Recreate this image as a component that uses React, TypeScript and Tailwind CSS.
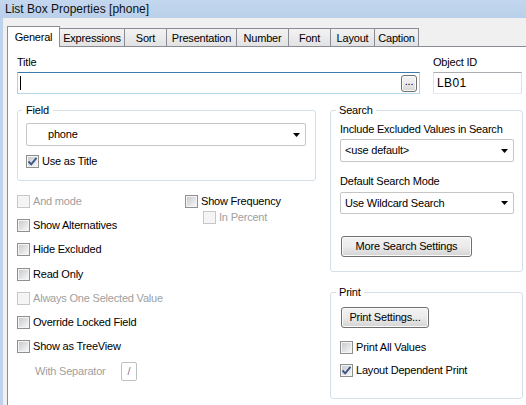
import React from "react";

const TABS = [
  { label: "General", w: "w-[53px]", active: true },
  { label: "Expressions", w: "w-[65px]" },
  { label: "Sort", w: "w-[42px]" },
  { label: "Presentation", w: "w-[70px]" },
  { label: "Number", w: "w-[52px]" },
  { label: "Font", w: "w-[42px]" },
  { label: "Layout", w: "w-[44px]" },
  { label: "Caption", w: "w-[44px]" },
];

function Box({ checked = false, disabled = false }: { checked?: boolean; disabled?: boolean }) {
  return (
    <span
      className={`flex h-[13px] w-[13px] shrink-0 items-center justify-center border ${
        disabled ? "border-[#c6c6c6] bg-[#f7f7f7]" : "border-[#8e8f8f] bg-[#f4f4f4]"
      }`}
    >
      <span
        className={`relative h-[9px] w-[9px] ${
          disabled ? "bg-[#f4f4f4]" : "bg-gradient-to-br from-[#c8cbd0] to-[#f6f6f6]"
        }`}
      >
        {checked && (
          <svg width="11" height="11" viewBox="0 0 11 11" className="absolute -left-[1px] -top-[1px]">
            <path d="M1.5 5.5 L4.2 8.3 L9.5 1.8" fill="none" stroke="#3e5585" strokeWidth="1.9" />
          </svg>
        )}
      </span>
    </span>
  );
}

function Check({
  label,
  checked,
  disabled,
  className = "",
}: {
  label: string;
  checked?: boolean;
  disabled?: boolean;
  className?: string;
}) {
  return (
    <div className={`flex items-center ${className}`}>
      <Box checked={checked} disabled={disabled} />
      <span className={`ml-[3px] whitespace-nowrap ${disabled ? "text-[#a0a0a0]" : "text-black"}`}>{label}</span>
    </div>
  );
}

function Combo({ value, className = "" }: { value: string; className?: string }) {
  return (
    <div
      className={`flex items-center justify-between rounded-[2px] border border-[#c5c5c5] bg-white ${className}`}
    >
      <span className="whitespace-nowrap">{value}</span>
      <svg width="7" height="4" viewBox="0 0 7 4" className="mr-[5px]">
        <path d="M0 0h7L3.5 4z" fill="#000" />
      </svg>
    </div>
  );
}

function Button({ label, className = "" }: { label: string; className?: string }) {
  return (
    <div
      className={`flex items-center justify-center rounded-[3px] border border-[#707070] bg-gradient-to-b from-[#f2f2f2] via-[#ebebeb] to-[#d4d4d4] shadow-[inset_0_0_0_1px_#fbfbfb] ${className}`}
    >
      {label}
    </div>
  );
}

export default function App() {
  return (
    <div className="flex h-[405px] w-[526px] flex-col overflow-hidden bg-[#f0f0f0] font-['Liberation_Sans',Arial,sans-serif] text-[11px] leading-[13px] tracking-[-0.2px] text-black">
      {/* title bar */}
      <div className="flex h-[18px] shrink-0 items-center bg-gradient-to-b from-[#c3d7ee] to-[#b9d0ea] pl-[5px] text-[12px] tracking-normal text-[#111]">
        List Box Properties [phone]
      </div>

      <div className="flex flex-1">
        <div className="w-[3px] shrink-0 bg-[#bed3eb]" />
        <div className="flex flex-1 flex-col pl-[4px] pt-[8px]">
          {/* tabs */}
          <div className="flex h-[21px] items-end">
            {TABS.map((t) =>
              t.active ? (
                <div
                  key={t.label}
                  className={`relative z-10 flex h-[21px] items-center justify-center border border-b-0 border-[#898c95] bg-white ${t.w}`}
                >
                  {t.label}
                </div>
              ) : (
                <div
                  key={t.label}
                  className={`flex h-[19px] items-center justify-center border-r border-t border-[#898c95] bg-gradient-to-b from-[#f3f3f3] to-[#e1e1e1] ${t.w}`}
                >
                  {t.label}
                </div>
              )
            )}
          </div>

          {/* panel */}
          <div className="-mt-[1px] flex-1 border-l border-t border-[#898c95] bg-white pl-[9px] pt-[9px]">
            {/* title / object id */}
            <div className="flex">
              <div className="flex w-[403px] flex-col">
                <div className="h-[13px]">Title</div>
                <div className="mt-[3px] flex h-[22px] items-center justify-between border border-[#b5cfe7] border-t-[#3d7bad] border-b-[#b7d9ed]">
                  <span className="ml-[2px] h-[14px] w-px bg-black" />
                  <Button label="..." className="mr-[2px] h-[17px] w-[16px] rounded-[2px] pb-[3px]" />
                </div>
              </div>
              <div className="ml-[13px] flex w-[89px] flex-col">
                <div className="h-[13px]">Object ID</div>
                <div className="mt-[3px] flex h-[22px] items-center border border-[#e2e3ea] border-t-[#abadb3] border-b-[#e3e9ef] pl-[3px] text-[12px] tracking-[0.4px]">
                  LB01
                </div>
              </div>
            </div>

            <div className="mt-[10px] flex">
              {/* left column */}
              <div className="flex w-[299px] flex-col">
                <fieldset className="rounded-[3px] border border-[#d5dfe5] pb-[12px] pl-[8px] pr-[9px]">
                  <legend className="-ml-[4px] px-[4px] leading-[13px]">Field</legend>
                  <Combo value="phone" className="mt-[6px] h-[23px] pl-[21px]" />
                  <Check label="Use as Title" checked className="mt-[9px] h-[13px]" />
                </fieldset>

                <div className="mt-[8px] flex">
                  <div className="flex w-[168px] flex-col">
                    <Check label="And mode" disabled className="h-[24.3px]" />
                    <Check label="Show Alternatives" className="h-[24.3px]" />
                    <Check label="Hide Excluded" className="h-[24.3px]" />
                    <Check label="Read Only" className="h-[24.3px]" />
                    <Check label="Always One Selected Value" disabled className="h-[24.3px]" />
                    <Check label="Override Locked Field" className="h-[24.3px]" />
                    <Check label="Show as TreeView" className="h-[24.3px]" />
                    <div className="mt-[3px] flex items-center pl-[18px]">
                      <span className="w-[86px] text-[#a0a0a0]">With Separator</span>
                      <div className="flex h-[19px] w-[16px] items-center justify-center rounded-[2px] border border-[#c0c0c0] text-[#8a7a9a]">
                        /
                      </div>
                    </div>
                  </div>
                  <div className="flex flex-col">
                    <Check label="Show Frequency" className="h-[24.3px]" />
                    <Check label="In Percent" disabled className="-mt-[2px] ml-[18px] h-[13px]" />
                  </div>
                </div>
              </div>

              {/* right column */}
              <div className="ml-[14px] flex w-[193px] flex-col">
                <fieldset className="rounded-[3px] border border-[#d5dfe5] pb-[14px] pl-[9px] pr-[8px]">
                  <legend className="-ml-[4px] px-[3px] leading-[13px]">Search</legend>
                  <div className="mt-[6px] h-[13px] whitespace-nowrap">Include Excluded Values in Search</div>
                  <Combo value="<use default>" className="mt-[3px] h-[23px] pl-[4px]" />
                  <div className="mt-[13px] h-[13px]">Default Search Mode</div>
                  <Combo value="Use Wildcard Search" className="mt-[4px] h-[22px] pl-[4px]" />
                  <Button label="More Search Settings" className="ml-[1px] mt-[22px] h-[21px] w-[131px]" />
                </fieldset>

                <fieldset className="mt-[14px] rounded-[3px] border border-[#d5dfe5] pb-[21px] pl-[9px] pr-[8px]">
                  <legend className="-ml-[4px] px-[3px] leading-[13px]">Print</legend>
                  <Button label="Print Settings..." className="ml-[1px] mt-[8px] h-[21px] w-[88px]" />
                  <Check label="Print All Values" className="mt-[13px] h-[13px]" />
                  <Check label="Layout Dependent Print" checked className="mt-[10px] h-[13px]" />
                </fieldset>
              </div>
            </div>
          </div>
        </div>
      </div>
    </div>
  );
}
